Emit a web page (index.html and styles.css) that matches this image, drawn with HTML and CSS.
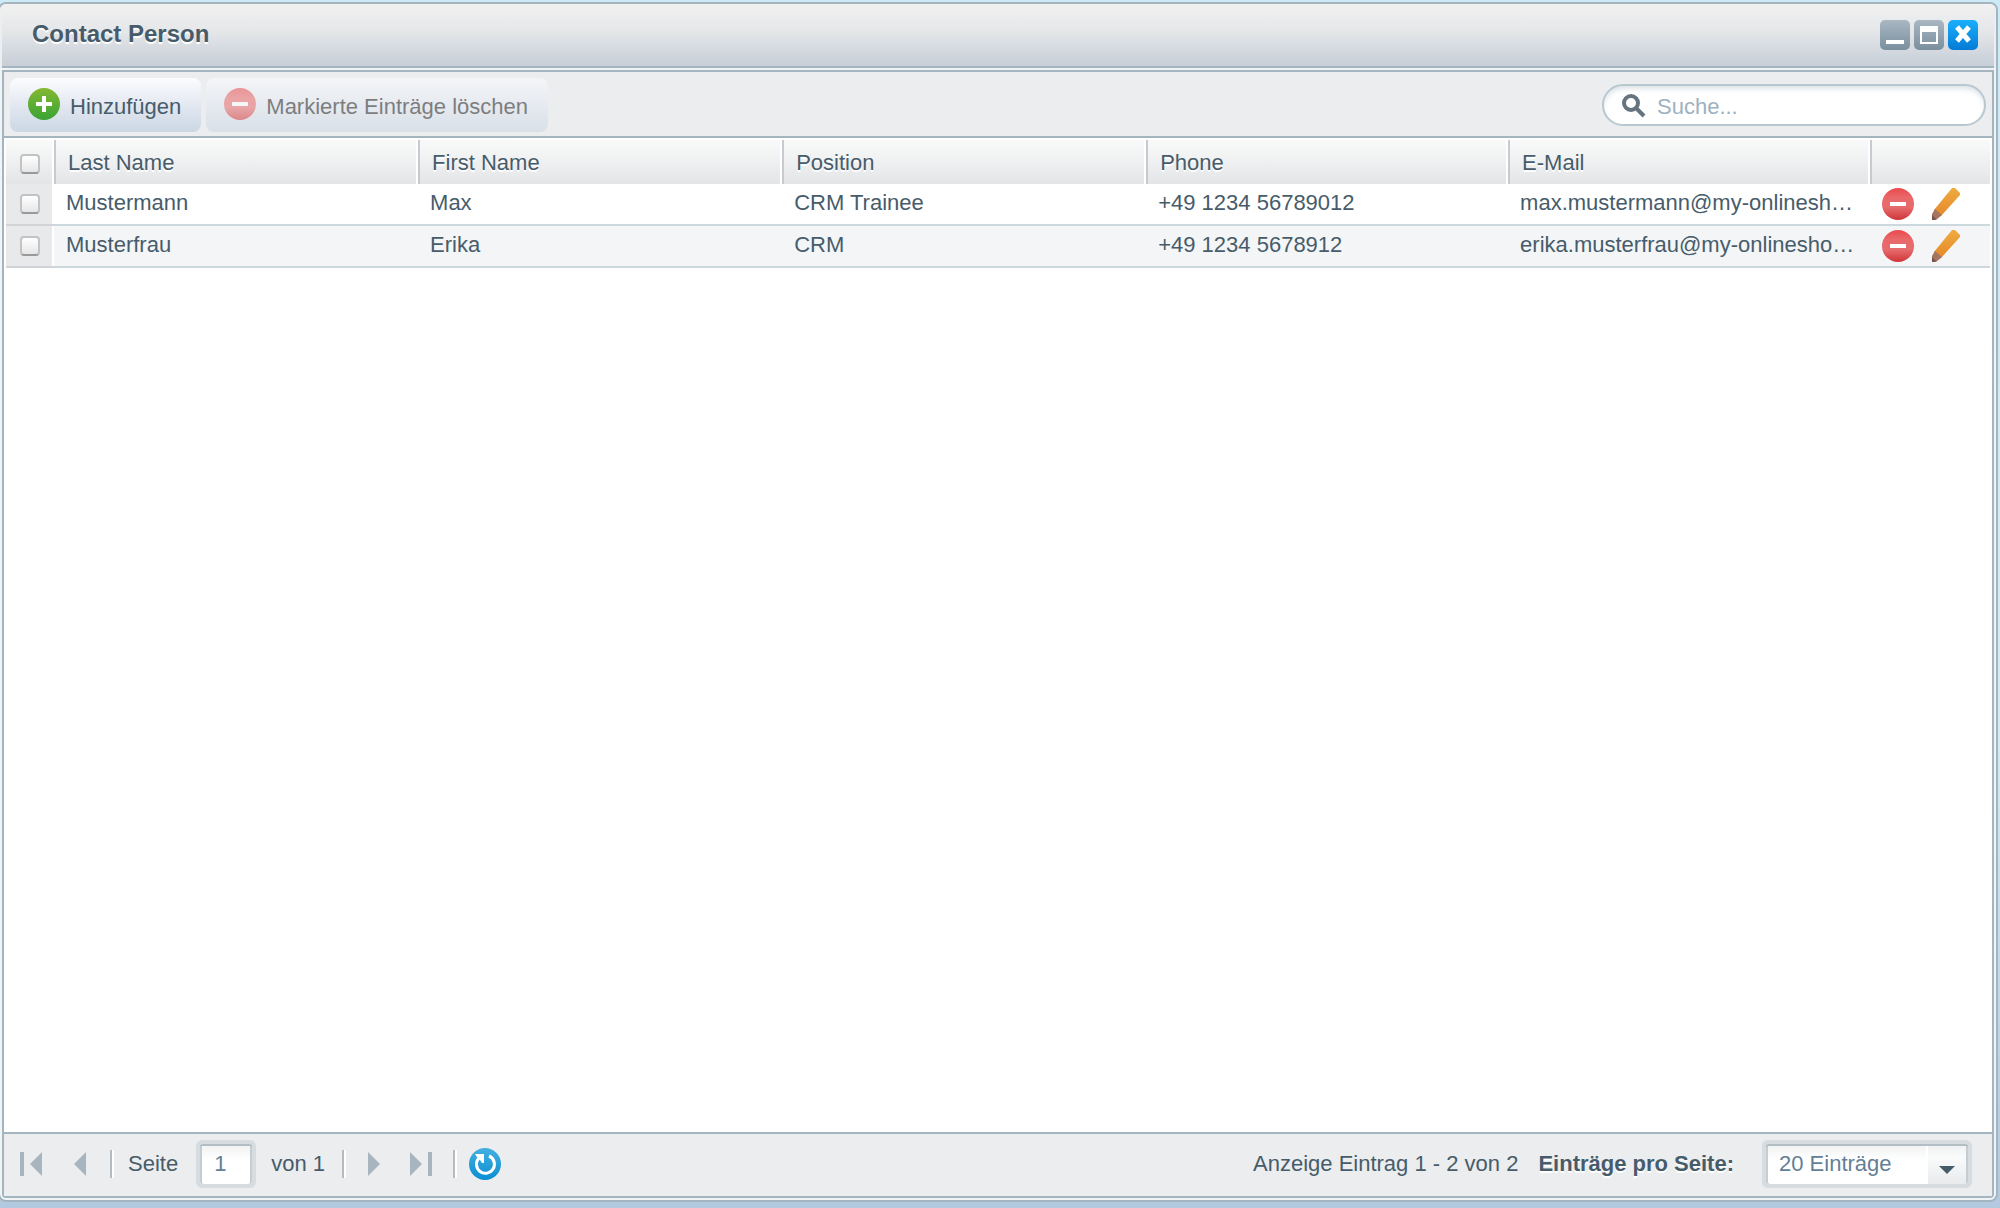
FILE: index.html
```html
<!DOCTYPE html>
<html lang="de">
<head>
<meta charset="utf-8">
<meta name="viewport" content="width=device-width, initial-scale=1">
<title>Contact Person</title>
<link rel="stylesheet" href="styles.css">
</head>
<body>
<svg class="defs" aria-hidden="true">
  <defs>
    <linearGradient id="red" x1="0" y1="0" x2="0" y2="1">
      <stop offset="0" stop-color="#ea4a4d"/><stop offset=".3" stop-color="#e9686a"/>
      <stop offset=".6" stop-color="#e66c6e"/><stop offset="1" stop-color="#cf3538"/>
    </linearGradient>
    <linearGradient id="green" x1="0" y1="0" x2="0" y2="1">
      <stop offset="0" stop-color="#85b832"/><stop offset="1" stop-color="#38a335"/>
    </linearGradient>
    <linearGradient id="blue" x1="0" y1="0" x2="0" y2="1">
      <stop offset="0" stop-color="#45b0e0"/><stop offset="1" stop-color="#0a8ed2"/>
    </linearGradient>
    <linearGradient id="orange" x1="0" y1="0" x2="0" y2="1">
      <stop offset="0" stop-color="#efab40"/><stop offset="1" stop-color="#e5892a"/>
    </linearGradient>
    <symbol id="minus" viewBox="0 0 32 32">
      <circle cx="16" cy="16" r="16" fill="url(#red)"/>
      <rect x="8" y="14" width="16" height="4" fill="#fff"/>
    </symbol>
    <symbol id="plus" viewBox="0 0 32 32">
      <circle cx="16" cy="16" r="16" fill="url(#green)"/>
      <path d="M14 8h4v6h6v4h-6v6h-4v-6H8v-4h6z" fill="#fff"/>
    </symbol>
    <symbol id="pencil" viewBox="0 0 32 32">
      <path d="M22 0h3l5 5v2L11 28l-7-6z" fill="url(#orange)"/>
      <path d="M5 21l7 6-6 5H2v-6z" fill="#a57560"/>
      <path d="M2 27l4 4-2 1H2z" fill="#75554b"/>
    </symbol>
  </defs>
</svg>
<main class="window">
  <header class="titlebar">
    <h1 class="title">Contact Person</h1>
    <div class="tools">
      <button class="tool" type="button" aria-label="Minimieren">
        <svg viewBox="0 0 30 30"><rect x="6" y="20" width="18" height="4" fill="#fff"/></svg>
      </button>
      <button class="tool" type="button" aria-label="Maximieren">
        <svg viewBox="0 0 30 30"><path d="M6 6h18v18H6zm2 6v10h14V12z" fill="#fff" fill-rule="evenodd"/></svg>
      </button>
      <button class="tool tool-close" type="button" aria-label="Schließen">
        <svg viewBox="0 0 30 30"><path d="M9 7l12 14M21 7L9 21" fill="none" stroke="#fff" stroke-width="5"/></svg>
      </button>
    </div>
  </header>
  <section class="panel">
    <div class="toolbar">
      <button class="action" type="button">
        <svg class="icon"><use href="#plus"/></svg><span>Hinzufügen</span>
      </button>
      <button class="action" type="button" disabled>
        <svg class="icon"><use href="#minus"/></svg><span>Markierte Einträge löschen</span>
      </button>
      <label class="search">
        <svg class="search-icon" viewBox="0 0 26 26" aria-hidden="true">
          <circle cx="10" cy="11" r="7" fill="none" stroke="#66747f" stroke-width="4"/>
          <path d="M15 16l8 8" stroke="#66747f" stroke-width="4"/>
        </svg>
        <input class="search-input" type="text" placeholder="Suche..." aria-label="Suche">
      </label>
    </div>
    <div class="grid">
      <table class="table">
        <colgroup><col class="col-check"><col class="col-wide"><col class="col-wide"><col class="col-wide"><col><col><col class="col-actions"></colgroup>
        <thead>
          <tr>
            <th class="check"><input type="checkbox" aria-label="Alle auswählen"></th>
            <th>Last Name</th><th>First Name</th><th>Position</th><th>Phone</th><th>E-Mail</th><th></th>
          </tr>
        </thead>
        <tbody>
          <tr>
            <td class="check"><input type="checkbox" aria-label="Mustermann auswählen"></td>
            <td>Mustermann</td><td>Max</td><td>CRM Trainee</td><td>+49 1234 56789012</td><td>max.mustermann@my-onlineshop.com</td>
            <td class="actions"><div class="row-actions">
              <button type="button" aria-label="Löschen"><svg class="icon"><use href="#minus"/></svg></button>
              <button type="button" aria-label="Bearbeiten"><svg class="icon"><use href="#pencil"/></svg></button>
            </div></td>
          </tr>
          <tr>
            <td class="check"><input type="checkbox" aria-label="Musterfrau auswählen"></td>
            <td>Musterfrau</td><td>Erika</td><td>CRM</td><td>+49 1234 5678912</td><td>erika.musterfrau@my-onlineshop.com</td>
            <td class="actions"><div class="row-actions">
              <button type="button" aria-label="Löschen"><svg class="icon"><use href="#minus"/></svg></button>
              <button type="button" aria-label="Bearbeiten"><svg class="icon"><use href="#pencil"/></svg></button>
            </div></td>
          </tr>
        </tbody>
      </table>
    </div>
    <footer class="pager">
      <div class="arrows">
        <button type="button" aria-label="Erste Seite"><svg class="arrow" viewBox="0 0 24 24"><path d="M1 0h4v24H1zM23 0v24L11 12z"/></svg></button>
        <button type="button" aria-label="Vorherige Seite"><svg class="arrow" viewBox="0 0 24 24"><path d="M19 0v24L7 12z"/></svg></button>
      </div>
      <span class="divider"></span>
      <label class="page">Seite <input class="page-input" type="text" value="1"></label>
      <span class="total">von 1</span>
      <span class="divider"></span>
      <div class="arrows">
        <button type="button" aria-label="Nächste Seite"><svg class="arrow" viewBox="0 0 24 24"><path d="M6 0v24l12-12z"/></svg></button>
        <button type="button" aria-label="Letzte Seite"><svg class="arrow" viewBox="0 0 24 24"><path d="M0 0v24l12-12zM18 0h4v24h-4z"/></svg></button>
      </div>
      <span class="divider"></span>
      <button class="refresh" type="button" aria-label="Aktualisieren">
        <svg class="icon" viewBox="0 0 32 32">
          <circle cx="16" cy="16" r="16" fill="url(#blue)"/>
          <path d="M20 8a9 9 0 1 1-10 2" fill="none" stroke="#fff" stroke-width="3"/>
          <path d="M6 6h9v9h-2l-2-3-3-3z" fill="#fff"/>
        </svg>
      </button>
      <span class="status">Anzeige Eintrag 1 - 2 von 2</span>
      <label class="size-label" for="size">Einträge pro Seite:</label>
      <div class="combo">
        <select id="size" class="combo-select"><option>20 Einträge</option><option>40 Einträge</option></select>
        <span class="combo-trigger"><svg viewBox="0 0 16 8"><path d="M0 0h16L8 8z" fill="#475c6a"/></svg></span>
      </div>
    </footer>
  </section>
</main>
</body>
</html>
```

FILE: styles.css
```css
:root {
  --line: #a4b5c0;
  --text: #475c6a;
  --bar: #ebedef;
}

* { box-sizing: border-box; }

body {
  margin: 0;
  min-height: 100vh;
  display: flex;
  background: linear-gradient(#cdeaf6, #d6ecf5 60%, #b2c9e0);
  color: var(--text);
  font: 22px/26px "Liberation Sans", Arial, sans-serif;
}

button, input, select { font: inherit; color: inherit; }

button {
  display: flex;
  padding: 0;
  border: 0;
  background: none;
}

.defs { position: absolute; width: 0; height: 0; }
.icon { display: block; width: 32px; height: 32px; }

.window {
  flex: 1;
  min-width: 0;
  display: flex;
  flex-direction: column;
  margin: 2px 2px 6px -2px;
  border: 2px solid var(--line);
  border-radius: 8px;
  background: #f1f4f6;
}

.titlebar {
  display: flex;
  justify-content: space-between;
  align-items: center;
  height: 64px;
  padding: 0 16px 2px 30px;
  border: solid #eceff1;
  border-width: 0 2px;
  border-radius: 6px 6px 0 0;
  background: linear-gradient(#f1f1f1, #e4e6e8 45%, #ccd3db 85%, #c7cdd4);
  box-shadow: inset 0 -2px var(--line);
}

.title {
  margin: 0;
  padding-bottom: 2px;
  font-size: 24px;
  line-height: 28px;
  text-shadow: 0 2px #fff;
}

.tools { display: flex; gap: 4px; }

.tool {
  width: 30px;
  height: 30px;
  border-radius: 5px;
  background: linear-gradient(#a9b8c3, #7a8f9d);
}

.tool-close { background: linear-gradient(#1aaffb, #047bd6); }

.panel {
  flex: 1;
  display: flex;
  flex-direction: column;
  margin: 2px;
  border: 2px solid var(--line);
  border-radius: 0 0 4px 4px;
}

.toolbar {
  display: flex;
  gap: 5px;
  padding: 6px 6px 4px;
  border-bottom: 2px solid var(--line);
  background: var(--bar);
}

.action {
  gap: 10px;
  height: 54px;
  padding: 10px 20px 6px 18px;
  border-radius: 8px;
  background: linear-gradient(#fbfcfd, #e6eaf2 45%, #cbd7e4);
  line-height: 38px;
}

.action:disabled { color: #222; opacity: .55; }

.search {
  display: flex;
  align-items: center;
  gap: 10px;
  width: 384px;
  height: 42px;
  margin: 6px 0 0 auto;
  padding: 0 18px 0 17px;
  border: 2px solid #b8c7d0;
  border-radius: 21px;
  background: #fff;
  box-shadow: inset 0 4px 6px -2px #d3dce2;
}

.search-icon { width: 26px; height: 26px; }

.search-input {
  flex: 1;
  min-width: 0;
  padding: 4px 0 0;
  border: 0;
  outline: 0;
  background: none;
}

.search-input::placeholder { color: #9db2c0; opacity: 1; }

.grid {
  flex: 1;
  padding: 2px 2px 0;
  background: #fff;
}

.table {
  width: 100%;
  table-layout: fixed;
  border-collapse: separate;
  border-spacing: 0;
}

.col-check { width: 48px; }
.col-wide { width: 18.35%; }
.col-actions { width: 120px; }

th, td {
  overflow: hidden;
  padding: 0 12px;
  text-align: left;
  text-overflow: ellipsis;
  white-space: nowrap;
  font-weight: normal;
}

th {
  height: 44px;
  padding-top: 2px;
  border: solid #c5cbd0;
  border-width: 0 0 0 2px;
  background: linear-gradient(#fafafa, #e4e5e7);
  box-shadow: inset -2px 0 #fff;
  text-shadow: 0 2px #fff;
}

th:last-child { box-shadow: none; }

td {
  height: 42px;
  padding-bottom: 2px;
  border-bottom: 2px solid #cdd7de;
}

tbody tr:nth-child(even) { background: #f3f5f7; }

.check {
  padding: 0 0 0 14px;
  border-left: 0;
}

th.check { padding-top: 4px; }

td.check {
  border-color: #d2d3d6;
  background: #e8e9eb;
  box-shadow: inset -2px 0 #fff;
}

.check input {
  appearance: none;
  display: block;
  width: 20px;
  height: 20px;
  margin: 0;
  border: 2px solid #c3c3c3;
  border-bottom-color: #999;
  border-radius: 4px;
  background: linear-gradient(#fff, #e6e6e6);
}

.table .actions { padding: 0; }

.row-actions {
  display: flex;
  gap: 16px;
  padding-left: 12px;
}

.pager {
  display: flex;
  align-items: center;
  height: 64px;
  padding: 0 20px 2px 15px;
  border-top: 2px solid var(--line);
  background: var(--bar);
}

.arrows { display: flex; gap: 24px; }
.arrow { width: 24px; height: 24px; fill: #a9b5be; }

.divider {
  width: 4px;
  height: 28px;
  border: solid #b5bcc1;
  border-width: 0 0 0 2px;
  background: #fff;
}

.arrows + .divider { margin-left: 19px; }

.page {
  display: flex;
  align-items: center;
  gap: 18px;
  margin-left: 14px;
}

.page-input, .combo {
  height: 48px;
  border: 4px solid #d6dce0;
  border-radius: 6px;
  background: linear-gradient(#f0f1f1, #fff 40%);
  box-shadow: inset 0 2px #b3bdc4, inset 2px 0 #c5cdd2, inset -2px 0 #c5cdd2;
  color: #647f96;
}

.page-input { width: 60px; padding: 0 14px; }
.total { margin: 0 17px 0 15px; }
.divider + .arrows { margin-left: 16px; }
.refresh { margin-left: 12px; }
.status { margin-left: auto; }

.size-label {
  margin-left: 20px;
  font-weight: bold;
  text-shadow: 0 2px #fff;
}

.combo {
  position: relative;
  width: 210px;
  margin-left: 28px;
}

.combo-select {
  appearance: none;
  width: 100%;
  height: 100%;
  padding: 0 44px 0 13px;
  border: 0;
  background: none;
}

.combo-trigger {
  position: absolute;
  inset: 2px 2px 0 auto;
  display: flex;
  align-items: center;
  justify-content: center;
  width: 40px;
  padding-top: 10px;
  border-left: 2px solid #fff;
  background: linear-gradient(#f0f1f2, #fafbfb 30%, #e8eaec);
  pointer-events: none;
}

.combo-trigger svg { width: 16px; height: 8px; }
```
